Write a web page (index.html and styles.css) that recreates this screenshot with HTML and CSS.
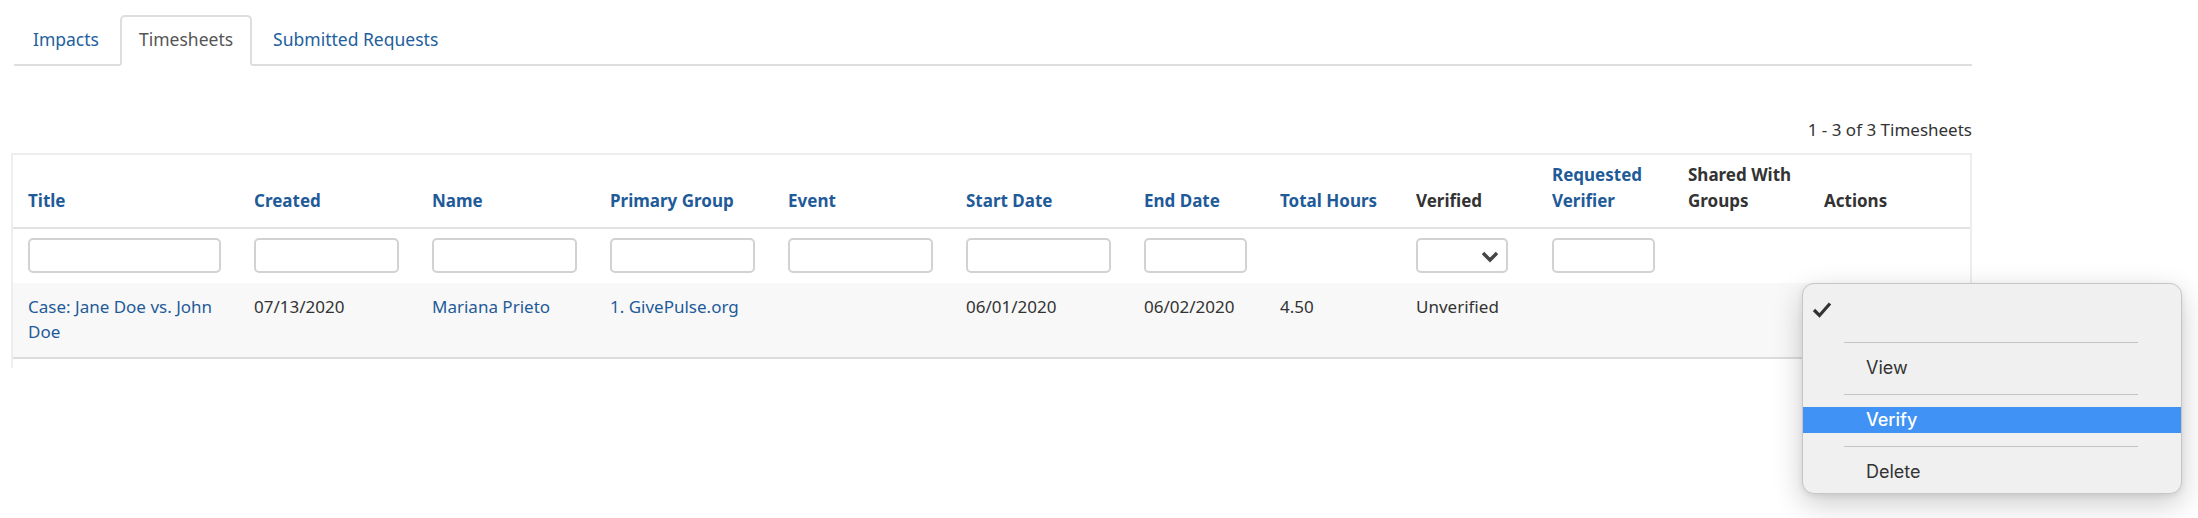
FILE: index.html
```html
<!DOCTYPE html>
<html lang="en">
<head>
    <meta charset="UTF-8">
    <meta name="viewport" content="width=device-width, initial-scale=1.0">
    <title>Timesheets</title>
    <link rel="stylesheet" href="styles.css">
</head>
<body>

<div class="page">
    <ul class="tabs">
        <li class="tab"><a href="#">Impacts</a></li>
        <li class="tab active"><a href="#">Timesheets</a></li>
        <li class="tab"><a href="#">Submitted Requests</a></li>
    </ul>

    <div class="count">1 - 3 of 3 Timesheets</div>

    <div class="grid-box">
        <table class="grid">
            <colgroup>
                <col class="col-title">
                <col class="col-wide">
                <col class="col-wide">
                <col class="col-wide">
                <col class="col-wide">
                <col class="col-wide">
                <col class="col-narrow">
                <col class="col-narrow">
                <col class="col-narrow">
                <col class="col-narrow">
                <col class="col-narrow">
                <col>
            </colgroup>
            <thead>
                <tr class="head-row">
                    <th><a href="#">Title</a></th>
                    <th><a href="#">Created</a></th>
                    <th><a href="#">Name</a></th>
                    <th><a href="#">Primary Group</a></th>
                    <th><a href="#">Event</a></th>
                    <th><a href="#">Start Date</a></th>
                    <th><a href="#">End Date</a></th>
                    <th><a href="#">Total Hours</a></th>
                    <th>Verified</th>
                    <th><a href="#">Requested Verifier</a></th>
                    <th>Shared With Groups</th>
                    <th>Actions</th>
                </tr>
                <tr class="filter-row">
                    <td><input type="text"></td>
                    <td><input type="text"></td>
                    <td><input type="text"></td>
                    <td><input type="text"></td>
                    <td><input type="text"></td>
                    <td><input type="text"></td>
                    <td><input type="text"></td>
                    <td></td>
                    <td>
                        <div class="select">
                            <svg width="18" height="12" viewBox="0 0 18 12"><polyline points="2,2 9,9 16,2" fill="none" stroke="#444" stroke-width="3.4"/></svg>
                        </div>
                    </td>
                    <td><input type="text"></td>
                    <td></td>
                    <td></td>
                </tr>
            </thead>
            <tbody>
                <tr class="data-row">
                    <td><a href="#">Case: Jane Doe vs. John Doe</a></td>
                    <td>07/13/2020</td>
                    <td><a href="#">Mariana Prieto</a></td>
                    <td><a href="#">1. GivePulse.org</a></td>
                    <td></td>
                    <td>06/01/2020</td>
                    <td>06/02/2020</td>
                    <td>4.50</td>
                    <td>Unverified</td>
                    <td></td>
                    <td></td>
                    <td></td>
                </tr>
            </tbody>
        </table>
    </div>
</div>

<!-- actions dropdown, open -->
<div class="popup">
    <div class="opt opt-first">
        <svg class="check" width="20" height="17" viewBox="0 0 20 17"><polyline points="2,9 7.5,14.5 18,2.5" fill="none" stroke="#333" stroke-width="3.2"/></svg>
    </div>
    <div class="opt sep"></div>
    <div class="opt">View</div>
    <div class="opt sep"></div>
    <div class="opt selected">Verify</div>
    <div class="opt sep"></div>
    <div class="opt">Delete</div>
</div>

</body>
</html>
```

FILE: styles.css
```css
body {
    margin: 0;
    font-family: "Noto Sans", Arial, sans-serif;
    font-size: 17px;
    color: #333;
    background-color: #fff;
}
a {
    color: #1f5b98;
    text-decoration: none;
}
.page {
    width: 1961px;
    padding-left: 11px;
}

/* tabs */
.tabs {
    display: flex;
    list-style: none;
    margin: 15px 0 0 3px;
    padding: 0;
    border-bottom: 2px solid #dedede;
}
.tab {
    margin: 0 2px -2px 0;
    padding: 10px 17px 13px;
    border: 2px solid transparent;
    border-radius: 5px 5px 0 0;
    font-size: 17.5px;
    line-height: 24px;
}
.tab a {
    color: #23609d;
}
.tab.active {
    border-color: #dedede;
    border-bottom-color: #fff;
    background-color: #fff;
}
.tab.active a {
    color: #555;
}

.count {
    margin: 52px 0 11px;
    line-height: 24px;
    text-align: right;
}

/* table */
.grid-box {
    border: 2px solid #eee;
    border-bottom: none;
    padding-bottom: 9px;
}
.grid {
    width: 100%;
    table-layout: fixed;
    border-collapse: separate;
    border-spacing: 0;
}
.col-title {
    width: 226px;
}
.col-wide {
    width: 178px;
}
.col-narrow {
    width: 136px;
}
.grid th {
    text-align: left;
    vertical-align: bottom;
    font-weight: 700;
    line-height: 26px;
    padding: 0 8px 13px 15px;
    border-bottom: 2px solid #e2e2e2;
}
.head-row {
    height: 74px;
}
.filter-row td {
    vertical-align: top;
    padding: 9px 8px 10px 15px;
}
.filter-row input {
    display: block;
    box-sizing: border-box;
    width: calc(100% - 10px);
    height: 35px;
    margin: 0;
    border: 2px solid #d2d2d2;
    border-radius: 5px;
    background-color: #fff;
}
.select {
    box-sizing: border-box;
    width: 92px;
    height: 35px;
    border: 2px solid #d2d2d2;
    border-radius: 5px;
    display: flex;
    align-items: center;
    justify-content: flex-end;
    padding: 2px 7px 0 0;
}
.data-row td {
    vertical-align: top;
    background-color: #f8f8f8;
    line-height: 25px;
    padding: 11px 8px 13px 15px;
    border-bottom: 2px solid #dcdcdc;
}

/* dropdown menu */
.popup {
    position: absolute;
    left: 1802px;
    top: 283px;
    width: 380px;
    box-sizing: border-box;
    padding: 6px 0 8px;
    border: 1px solid #c6c6c6;
    border-radius: 12px;
    background-color: #f0f0f0;
    box-shadow: 0 10px 30px rgba(0, 0, 0, 0.2), 0 2px 6px rgba(0, 0, 0, 0.08);
    font-family: Inter, "Noto Sans", sans-serif;
    font-size: 18px;
    color: #333;
}
.opt {
    height: 26px;
    line-height: 26px;
    padding-left: 63px;
}
.opt-first {
    height: 39px;
    padding-left: 9px;
    display: flex;
    align-items: center;
}
.sep {
    display: flex;
    align-items: center;
    padding: 0 43px 0 41px;
}
.sep::before {
    content: "";
    flex: 1;
    border-top: 1px solid #c3c3c3;
}
.selected {
    background-color: #4093f4;
    color: #fff;
    font-weight: 500;
}
```
